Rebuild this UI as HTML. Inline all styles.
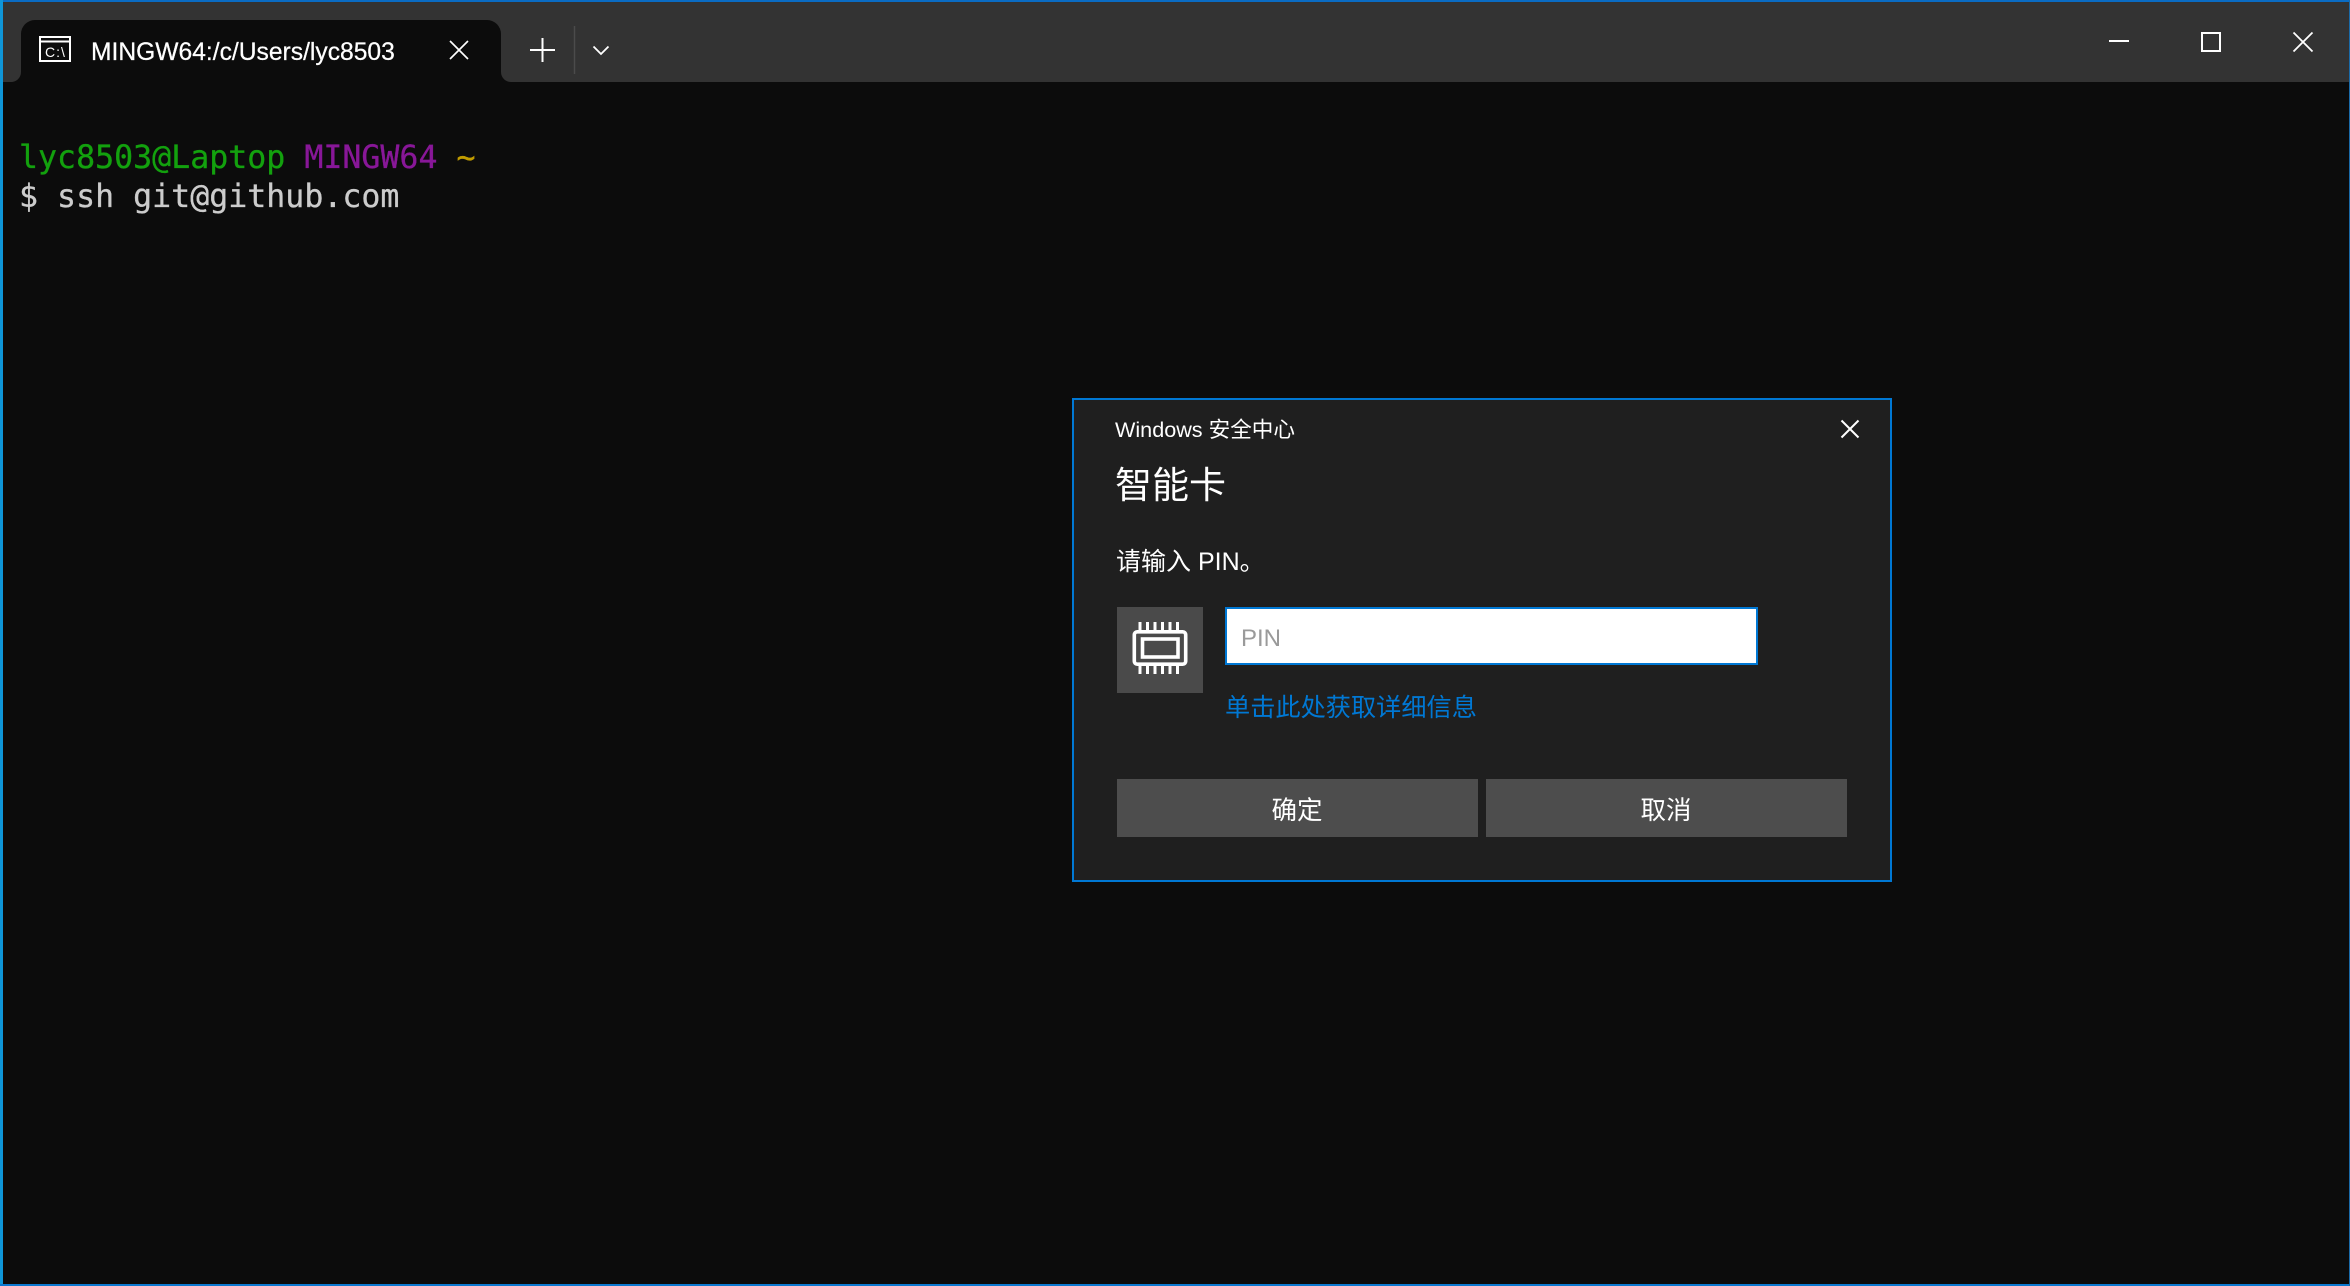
<!DOCTYPE html>
<html><head><meta charset="utf-8"><style>
html,body{margin:0;padding:0;width:2350px;height:1286px;overflow:hidden;background:#0c0c0c}
div,span,svg{position:absolute;white-space:nowrap}
.s{font-family:"Liberation Sans","Noto Sans CJK SC",sans-serif;color:#fff}
.m{font-family:"DejaVu Sans Mono","Liberation Mono",monospace;font-size:31.6px;line-height:38px;color:#ccc;-webkit-text-stroke:.3px currentColor}
.m span{position:static}
</style></head><body>
<div style="left:0;top:0;width:2350px;height:82px;background:#333"></div>
<div style="left:3px;top:70px;width:18px;height:12px;background:#0c0c0c"></div>
<div style="left:3px;top:70px;width:18px;height:12px;background:#333;border-bottom-right-radius:10px"></div>
<div style="left:21px;top:20px;width:480px;height:62px;background:#0c0c0c;border-radius:14px 14px 0 0"></div>
<div style="left:501px;top:70px;width:14px;height:12px;background:#0c0c0c"></div>
<div style="left:501px;top:60px;width:22px;height:22px;background:#333;border-bottom-left-radius:10px"></div>
<svg style="left:0;top:0" width="700" height="90" fill="none" stroke="#fff">
<path d="M40 37h30v24h-30zM40 41.500h30" stroke-width="2"/>
<text x="45" y="57" font-family="Liberation Sans,sans-serif" font-size="14" letter-spacing="1" fill="#fff" stroke="none">C:\</text>
<path d="M450 41l18 18M468 41l-18 18" stroke-width="1.700"/>
<path d="M542.500 38v24M530 50h25" stroke-width="2"/>
<path d="M574.500 26v48" stroke="#4b4b4b" stroke-width="1.500"/>
<path d="M593.500 46.500l7.500 7.500 7.500-7.500" stroke-width="1.800"/>
</svg>
<svg style="left:2100px;top:0" width="250" height="90" fill="none" stroke="#fff" stroke-width="2">
<path d="M9 41h20"/>
<rect x="102" y="33" width="18" height="18"/>
<path d="M193.500 32.500l19 19M212.500 32.500l-19 19" stroke-width="1.800"/>
</svg>
<div class="s" style="left:91px;top:35px;font-size:25px;line-height:34px;transform-origin:0 0;transform:scaleX(.985);-webkit-text-stroke:.25px #fff">MINGW64:/c/Users/lyc8503</div>
<div style="left:0;top:0;width:2350px;height:2px;background:#0a6cc4"></div>
<div style="left:0;top:0;width:2.500px;height:1286px;background:#0f96d8"></div>
<div style="left:0;top:1284px;width:2350px;height:2px;background:#0b78d0"></div>
<div style="right:0;top:0;width:1px;height:1286px;background:#1a6aa8"></div>
<div class="m" style="left:19px;top:139px"><span style="color:#13a10e">lyc8503@Laptop</span> <span style="color:#881798">MINGW64</span> <span style="color:#c19c00">~</span></div>
<div class="m" style="left:19px;top:178px">$ ssh git@github.com</div>

<div style="left:1072px;top:398px;width:816px;height:480px;background:#1f1f1f;border:2px solid #0078d4"></div>
<div class="s" style="left:1115px;top:414px;font-size:21.600px;line-height:32px">Windows 安全中心</div>
<div class="s" style="left:1115px;top:461px;font-size:37px;line-height:50px">智能卡</div>
<div class="s" style="left:1116px;top:544px;font-size:25px;line-height:36px">请输入 PIN。</div>
<svg style="left:1830px;top:414px" width="40" height="30" fill="none" stroke="#fff" stroke-width="2"><path d="M11.500 6.500l17 17M28.500 6.500l-17 17"/></svg>
<div style="left:1117px;top:607px;width:86px;height:86px;background:#4a4a4a"></div>
<svg style="left:1117px;top:607px" width="86" height="86" fill="none" stroke="#fff" stroke-width="3.600">
<rect x="17.300" y="24.800" width="51.400" height="32.400" rx="3"/>
<rect x="25.500" y="32" width="35.500" height="18"/>
<path d="M23 24v-9M30.500 24v-9M38 24v-9M45.500 24v-9M53 24v-9M60.500 24v-9M23 67v-9M30.500 67v-9M38 67v-9M45.500 67v-9M53 67v-9M60.500 67v-9" stroke-width="3"/>
</svg>
<div style="left:1225px;top:607px;width:529px;height:54px;background:#fff;border:2px solid #0078d4"></div>
<div class="s" style="left:1241px;top:622px;font-size:24px;line-height:34px;color:#9a9a9a">PIN</div>
<div class="s" style="left:1225px;top:690px;font-size:25.200px;line-height:36px;color:#0078d4">单击此处获取详细信息</div>
<div class="s" style="left:1117px;top:779px;width:360px;height:58px;padding-right:1px;background:#4d4d4d;font-size:25.500px;line-height:64px;text-align:center">确定</div>
<div class="s" style="left:1486px;top:779px;width:360px;height:58px;padding-right:1px;background:#4d4d4d;font-size:25.500px;line-height:64px;text-align:center">取消</div>
</body></html>
